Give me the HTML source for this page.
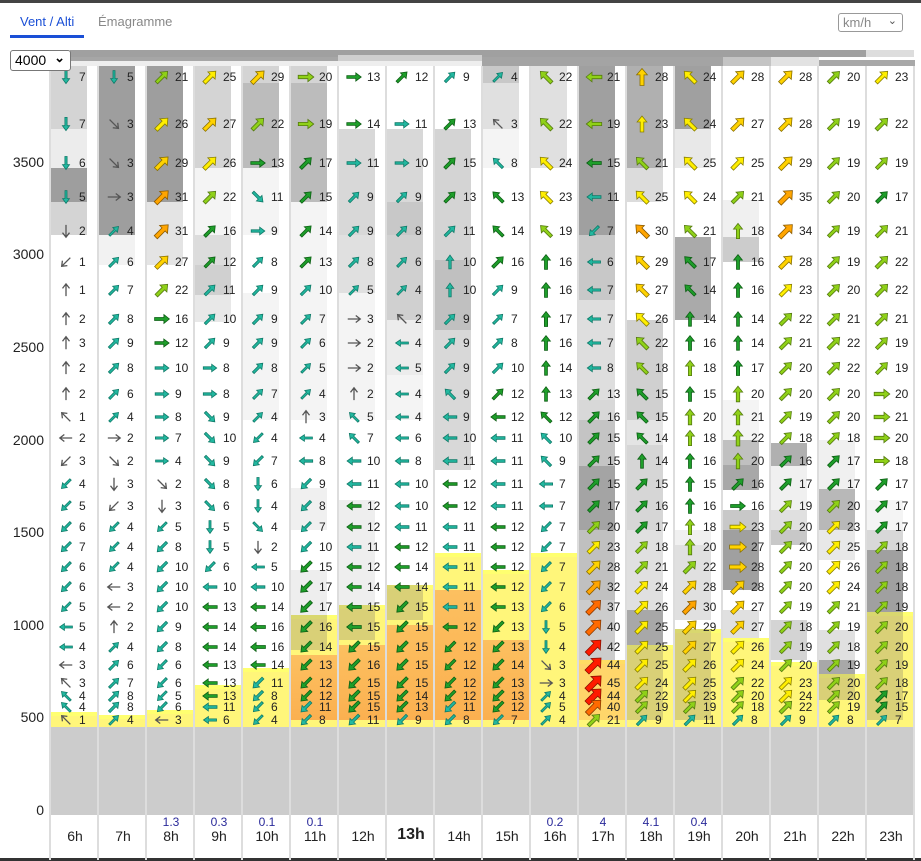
<!DOCTYPE html>
<html><head><meta charset="utf-8">
<style>
*{margin:0;padding:0;box-sizing:border-box}
html,body{width:921px;height:861px;overflow:hidden;background:#fff;font-family:"Liberation Sans",Arial,sans-serif;position:relative}
.abs{position:absolute}
.r{position:absolute;left:51px;height:14px;white-space:nowrap;font-size:12px;color:#222;line-height:14px;z-index:5}
.r b{display:inline-block;width:48px;padding-left:28px;font-weight:normal;position:relative}
.r b svg{position:absolute;left:4px;top:-4px;overflow:visible}
.yl{position:absolute;right:877px;font-size:14px;color:#222;width:44px;text-align:right}
.sep{position:absolute;top:66px;width:2px;height:794px;background:#ddd;z-index:4}
.hr{position:absolute;top:828px;font-size:14px;width:48px;text-align:center;color:#222}
.pr{position:absolute;top:815px;font-size:12px;width:48px;text-align:center;color:#2a2a9a}
</style></head><body>
<div class="abs" style="left:0;top:0;width:921px;height:3px;background:#444"></div>
<div class="abs" style="left:0;top:858px;width:921px;height:3px;background:#333"></div>
<div class="abs" style="left:20px;top:14px;font-size:13px;color:#1a4fd6">Vent / Alti</div>
<div class="abs" style="left:10px;top:35px;width:74px;height:3px;background:#1a4fd6"></div>
<div class="abs" style="left:98px;top:14px;font-size:13px;color:#888">Émagramme</div>
<div class="abs" style="left:838px;top:13px;width:65px;height:19px;border:1px solid #999;border-radius:3px;font-size:13px;color:#888;padding:1px 0 0 4px">km/h<span style="position:absolute;right:5px;top:0;font-size:11px;color:#555">&#8964;</span></div>

<div class="abs" style="left:70px;top:50px;width:796px;height:7px;background:#a0a0a0"></div>
<div class="abs" style="left:866px;top:50px;width:48px;height:7px;background:#ddd"></div>
<div class="abs" style="left:70px;top:57px;width:268px;height:4px;background:#a6a6a6"></div>
<div class="abs" style="left:338px;top:55px;width:144px;height:6px;background:#cfcfcf"></div>
<div class="abs" style="left:482px;top:57px;width:241px;height:9px;background:#a4a4a4"></div>
<div class="abs" style="left:723px;top:57px;width:48px;height:9px;background:#c4c4c4"></div>
<div class="abs" style="left:771px;top:57px;width:48px;height:9px;background:#e2e2e2"></div>
<div class="abs" style="left:819px;top:60px;width:96px;height:6px;background:#a8a8a8"></div>
<div class="abs" style="left:70px;top:61px;width:412px;height:5px;background:#eeeeee"></div>

<div id="bg"></div>

<div class="abs" style="left:51px;top:727px;width:863px;height:88px;background:#cccccc;z-index:3"></div>

<div class="yl" style="top:154px">3500</div>
<div class="yl" style="top:246px">3000</div>
<div class="yl" style="top:339px">2500</div>
<div class="yl" style="top:432px">2000</div>
<div class="yl" style="top:524px">1500</div>
<div class="yl" style="top:617px">1000</div>
<div class="yl" style="top:709px">500</div>
<div class="yl" style="top:802px">0</div>

<div class="abs" style="left:10px;top:50px;width:61px;height:21px;border:1px solid #777;border-radius:3px;background:#fff;font-size:14px;padding:1px 0 0 4px;z-index:9">4000<span style="position:absolute;right:5px;top:-1px;font-size:13px;font-weight:bold">&#8964;</span></div>

<div class="r" style="top:70px"><b>7</b><b>5</b><b>21</b><b>25</b><b>29</b><b>20</b><b>13</b><b>12</b><b>9</b><b>4</b><b>22</b><b>21</b><b>28</b><b>24</b><b>28</b><b>28</b><b>20</b><b>23</b></div>
<div class="r" style="top:117px"><b>7</b><b>3</b><b>26</b><b>27</b><b>22</b><b>19</b><b>14</b><b>11</b><b>13</b><b>3</b><b>22</b><b>19</b><b>23</b><b>24</b><b>27</b><b>28</b><b>19</b><b>22</b></div>
<div class="r" style="top:156px"><b>6</b><b>3</b><b>29</b><b>26</b><b>13</b><b>17</b><b>11</b><b>10</b><b>15</b><b>8</b><b>24</b><b>15</b><b>21</b><b>25</b><b>25</b><b>29</b><b>19</b><b>19</b></div>
<div class="r" style="top:190px"><b>5</b><b>3</b><b>31</b><b>22</b><b>11</b><b>15</b><b>9</b><b>9</b><b>13</b><b>13</b><b>23</b><b>11</b><b>25</b><b>24</b><b>21</b><b>35</b><b>20</b><b>17</b></div>
<div class="r" style="top:224px"><b>2</b><b>4</b><b>31</b><b>16</b><b>9</b><b>14</b><b>9</b><b>8</b><b>11</b><b>14</b><b>19</b><b>7</b><b>30</b><b>21</b><b>18</b><b>34</b><b>19</b><b>21</b></div>
<div class="r" style="top:255px"><b>1</b><b>6</b><b>27</b><b>12</b><b>8</b><b>13</b><b>8</b><b>6</b><b>10</b><b>16</b><b>16</b><b>6</b><b>29</b><b>17</b><b>16</b><b>28</b><b>19</b><b>22</b></div>
<div class="r" style="top:283px"><b>1</b><b>7</b><b>22</b><b>11</b><b>9</b><b>10</b><b>5</b><b>4</b><b>10</b><b>9</b><b>16</b><b>7</b><b>27</b><b>14</b><b>16</b><b>23</b><b>20</b><b>22</b></div>
<div class="r" style="top:312px"><b>2</b><b>8</b><b>16</b><b>10</b><b>9</b><b>7</b><b>3</b><b>2</b><b>9</b><b>7</b><b>17</b><b>7</b><b>26</b><b>14</b><b>14</b><b>22</b><b>21</b><b>21</b></div>
<div class="r" style="top:336px"><b>3</b><b>9</b><b>12</b><b>9</b><b>9</b><b>6</b><b>2</b><b>4</b><b>9</b><b>8</b><b>16</b><b>7</b><b>22</b><b>16</b><b>14</b><b>21</b><b>22</b><b>19</b></div>
<div class="r" style="top:361px"><b>2</b><b>8</b><b>10</b><b>8</b><b>8</b><b>5</b><b>2</b><b>5</b><b>9</b><b>10</b><b>14</b><b>8</b><b>18</b><b>18</b><b>17</b><b>20</b><b>22</b><b>19</b></div>
<div class="r" style="top:387px"><b>2</b><b>6</b><b>9</b><b>8</b><b>7</b><b>4</b><b>2</b><b>4</b><b>9</b><b>12</b><b>13</b><b>13</b><b>15</b><b>15</b><b>20</b><b>20</b><b>20</b><b>20</b></div>
<div class="r" style="top:410px"><b>1</b><b>4</b><b>8</b><b>9</b><b>4</b><b>3</b><b>5</b><b>4</b><b>9</b><b>12</b><b>12</b><b>16</b><b>15</b><b>20</b><b>21</b><b>19</b><b>20</b><b>21</b></div>
<div class="r" style="top:431px"><b>2</b><b>2</b><b>7</b><b>10</b><b>4</b><b>4</b><b>7</b><b>6</b><b>10</b><b>11</b><b>10</b><b>15</b><b>14</b><b>18</b><b>22</b><b>18</b><b>18</b><b>20</b></div>
<div class="r" style="top:454px"><b>3</b><b>2</b><b>4</b><b>9</b><b>7</b><b>8</b><b>10</b><b>8</b><b>11</b><b>11</b><b>9</b><b>15</b><b>14</b><b>16</b><b>20</b><b>16</b><b>17</b><b>18</b></div>
<div class="r" style="top:477px"><b>4</b><b>3</b><b>2</b><b>8</b><b>6</b><b>9</b><b>11</b><b>10</b><b>12</b><b>11</b><b>7</b><b>15</b><b>15</b><b>15</b><b>16</b><b>17</b><b>17</b><b>17</b></div>
<div class="r" style="top:499px"><b>5</b><b>3</b><b>3</b><b>6</b><b>4</b><b>8</b><b>12</b><b>10</b><b>12</b><b>11</b><b>7</b><b>17</b><b>16</b><b>16</b><b>16</b><b>19</b><b>20</b><b>17</b></div>
<div class="r" style="top:520px"><b>6</b><b>4</b><b>5</b><b>5</b><b>4</b><b>7</b><b>12</b><b>11</b><b>11</b><b>12</b><b>7</b><b>20</b><b>17</b><b>18</b><b>23</b><b>20</b><b>23</b><b>17</b></div>
<div class="r" style="top:540px"><b>7</b><b>4</b><b>8</b><b>5</b><b>2</b><b>10</b><b>11</b><b>12</b><b>11</b><b>12</b><b>7</b><b>23</b><b>18</b><b>20</b><b>27</b><b>20</b><b>25</b><b>18</b></div>
<div class="r" style="top:560px"><b>6</b><b>4</b><b>10</b><b>6</b><b>5</b><b>15</b><b>12</b><b>14</b><b>11</b><b>12</b><b>7</b><b>28</b><b>21</b><b>22</b><b>28</b><b>20</b><b>26</b><b>18</b></div>
<div class="r" style="top:580px"><b>6</b><b>3</b><b>10</b><b>10</b><b>10</b><b>17</b><b>14</b><b>14</b><b>11</b><b>12</b><b>7</b><b>32</b><b>24</b><b>28</b><b>28</b><b>20</b><b>24</b><b>18</b></div>
<div class="r" style="top:600px"><b>5</b><b>2</b><b>10</b><b>13</b><b>14</b><b>17</b><b>15</b><b>15</b><b>11</b><b>13</b><b>6</b><b>37</b><b>26</b><b>30</b><b>27</b><b>19</b><b>21</b><b>19</b></div>
<div class="r" style="top:620px"><b>5</b><b>2</b><b>9</b><b>14</b><b>16</b><b>16</b><b>15</b><b>15</b><b>12</b><b>13</b><b>5</b><b>40</b><b>25</b><b>29</b><b>27</b><b>18</b><b>19</b><b>20</b></div>
<div class="r" style="top:640px"><b>4</b><b>4</b><b>8</b><b>14</b><b>16</b><b>14</b><b>15</b><b>15</b><b>12</b><b>13</b><b>4</b><b>42</b><b>25</b><b>27</b><b>26</b><b>19</b><b>18</b><b>20</b></div>
<div class="r" style="top:658px"><b>3</b><b>6</b><b>6</b><b>13</b><b>14</b><b>13</b><b>16</b><b>15</b><b>12</b><b>14</b><b>3</b><b>44</b><b>25</b><b>26</b><b>24</b><b>20</b><b>19</b><b>19</b></div>
<div class="r" style="top:676px"><b>3</b><b>7</b><b>6</b><b>13</b><b>11</b><b>12</b><b>15</b><b>15</b><b>12</b><b>13</b><b>3</b><b>45</b><b>24</b><b>25</b><b>22</b><b>23</b><b>20</b><b>18</b></div>
<div class="r" style="top:689px"><b>4</b><b>8</b><b>5</b><b>13</b><b>8</b><b>12</b><b>15</b><b>14</b><b>12</b><b>13</b><b>4</b><b>44</b><b>22</b><b>23</b><b>20</b><b>24</b><b>20</b><b>17</b></div>
<div class="r" style="top:700px"><b>4</b><b>8</b><b>6</b><b>11</b><b>6</b><b>11</b><b>15</b><b>13</b><b>11</b><b>12</b><b>5</b><b>40</b><b>19</b><b>19</b><b>18</b><b>22</b><b>19</b><b>15</b></div>
<div class="r" style="top:713px"><b>1</b><b>4</b><b>3</b><b>6</b><b>4</b><b>8</b><b>11</b><b>9</b><b>8</b><b>7</b><b>4</b><b>21</b><b>9</b><b>11</b><b>8</b><b>9</b><b>8</b><b>7</b></div>

<div class="pr" style="left:147px">1.3</div><div class="pr" style="left:195px">0.3</div><div class="pr" style="left:243px">0.1</div><div class="pr" style="left:291px">0.1</div>
<div class="pr" style="left:531px">0.2</div><div class="pr" style="left:579px">4</div><div class="pr" style="left:627px">4.1</div><div class="pr" style="left:675px">0.4</div>
<div class="hr" style="left:51px">6h</div><div class="hr" style="left:99px">7h</div><div class="hr" style="left:147px">8h</div><div class="hr" style="left:195px">9h</div><div class="hr" style="left:243px">10h</div><div class="hr" style="left:291px">11h</div><div class="hr" style="left:339px">12h</div><div class="hr" style="left:387px;font-weight:bold;font-size:16px;top:826px">13h</div><div class="hr" style="left:435px">14h</div><div class="hr" style="left:483px">15h</div><div class="hr" style="left:531px">16h</div><div class="hr" style="left:579px">17h</div><div class="hr" style="left:627px">18h</div><div class="hr" style="left:675px">19h</div><div class="hr" style="left:723px">20h</div><div class="hr" style="left:771px">21h</div><div class="hr" style="left:819px">22h</div><div class="hr" style="left:867px">23h</div>

<script>
(function(){
var bg=document.getElementById('bg'),h='';
function R(c,y1,y2,col,w){h+='<div class="abs" style="left:'+(51+48*c)+'px;top:'+y1+'px;width:'+(w||36)+'px;height:'+(y2-y1)+'px;background:'+col+'"></div>';}
var cl=[[0,66,129,'#d4d4d4'],[0,129,168,'#ececec'],[0,168,202,'#9e9e9e'],[0,202,235,'#d4d4d4'],
[1,66,235,'#9e9e9e'],[1,235,265,'#f2f2f2'],
[2,66,202,'#9e9e9e'],[2,202,265,'#e4e4e4'],
[3,66,168,'#d4d4d4'],[3,168,235,'#f4f4f4'],[3,235,265,'#dcdcdc'],[3,265,295,'#d0d0d0'],[3,295,322,'#e8e8e8'],
[4,66,83,'#d4d4d4'],[4,83,168,'#bcbcbc'],[4,168,235,'#f4f4f4'],[4,293,420,'#f4f4f4'],
[5,66,83,'#d4d4d4'],[5,83,202,'#bcbcbc'],[5,202,420,'#f4f4f4'],[5,488,530,'#f0f0f0'],[5,570,615,'#eeeeee'],
[6,129,235,'#d8d8d8'],[6,235,293,'#e0e0e0'],[6,293,420,'#f4f4f4'],[6,500,605,'#eeeeee'],
[7,129,202,'#d8d8d8'],[7,202,235,'#c8c8c8'],[7,235,320,'#d0d0d0'],[7,320,375,'#ececec'],[7,375,420,'#f4f4f4'],
[8,129,260,'#d4d4d4'],[8,260,330,'#c0c0c0'],[8,330,470,'#d8d8d8'],
[9,66,83,'#c8c8c8'],[9,83,129,'#e0e0e0'],[9,129,168,'#f4f4f4'],
[10,66,168,'#e0e0e0'],
[11,66,235,'#a0a0a0'],[11,235,300,'#c8c8c8'],[11,300,400,'#dedede'],[11,400,420,'#d8d8d8'],[11,420,466,'#c4c4c4'],[11,466,530,'#a4a4a4'],[11,530,600,'#c0c0c0'],[11,600,660,'#cccccc'],
[12,66,168,'#b0b0b0'],[12,168,202,'#dcdcdc'],[12,320,420,'#d0d0d0'],[12,420,445,'#e4e4e4'],[12,445,530,'#d6d6d6'],[12,530,610,'#e0e0e0'],[12,610,645,'#a8a8a8'],
[13,66,129,'#a0a0a0'],[13,129,168,'#e8e8e8'],[13,237,320,'#aaaaaa'],[13,530,545,'#f0f0f0'],[13,545,620,'#e0e0e0'],
[14,200,237,'#f0f0f0'],[14,237,262,'#cccccc'],[14,400,440,'#f4f4f4'],[14,440,465,'#c0c0c0'],[14,465,490,'#a8a8a8'],[14,510,530,'#c8c8c8'],[14,530,590,'#a0a0a0'],[14,610,638,'#e0e0e0'],
[15,443,466,'#b0b0b0'],[15,466,510,'#f0f0f0'],[15,510,530,'#e0e0e0'],[15,530,545,'#c8c8c8'],[15,620,660,'#d4d4d4'],
[16,440,489,'#f0f0f0'],[16,489,530,'#b8b8b8'],[16,530,560,'#e8e8e8'],[16,630,660,'#e0e0e0'],[16,660,674,'#a8a8a8'],
[17,500,530,'#f4f4f4'],[17,530,550,'#d8d8d8'],[17,550,612,'#a0a0a0']];
cl.forEach(function(a){R(a[0],a[1],a[2],a[3]);});
var th=[712,715,710,685,668,615,605,585,553,570,553,660,645,629,638,662,674,612];
var org=[0,0,0,0,0,655,645,625,590,640,0,0,0,0,0,0,0,0];
th.forEach(function(t,c){R(c,t,727,'#fff67a',46);R(c,t,t+4,'#ffff70',46);if(org[c])R(c,org[c],720,'linear-gradient(#fcc060,#fbb050)',46);});
[[5,615,650],[6,605,640],[7,585,620],[12,645,720],[13,629,720],[17,612,720],[16,674,700]].forEach(function(a){R(a[0],a[1],a[2],'rgba(120,110,110,0.28)');});
R(11,660,720,'rgba(255,120,60,0.25)',46);
for(var i=0;i<19;i++)h+='<div class="sep" style="left:'+(49+48*i)+'px"></div>';
bg.innerHTML=h;

var D=["4444450000076555555556667777","4332111111112345555660111111","1111111222222234555555555556","1111111112233333445666666666","1123211111115544346666665555","2211111111106655555555555555","2221111222077666666666555555","1221111766666666666655555555","1111100111766666666666555555","1777711111166666666665555555","7777700000077766555554432111","6666566666111111111111111111","0077777777777011111111111111","7777777000000000001111111111","1111000000000012222111111111","1111111111111111111111111111","1111111111111111111111111111","1111111111222211111111111111"];
function col(s){if(s<=3)return['#888','#555'];if(s<=11)return['#22b8a0','#0f7a68'];if(s<=17)return['#1e9e2a','#0d5e14'];if(s<=22)return['#8fd118','#557a10'];if(s<=26)return['#ffee00','#8a8000'];if(s<=29)return['#ffd200','#8a7000'];if(s<=35)return['#ffa500','#8a5a00'];if(s<=41)return['#ff6a00','#8a3a00'];return['#ff1a00','#8a1000'];}
var rows=document.querySelectorAll('.r');
rows.forEach(function(r,ri){
 r.querySelectorAll('b').forEach(function(b,ci){
  var s=parseInt(b.textContent,10),d=+(D[ci][ri]||1),c=col(s),svg;
  var k=Math.min(s,45)/45,L=12+k*8,hw=3+k*3.8,sw=0.8+k*2,hl=4.5+k*3,y0=-L/2;
  if(s<=3){
   svg='<path d="M0 '+(L/2)+'V'+y0+'M-3.5 '+(y0+4.5)+'L0 '+y0+'L3.5 '+(y0+4.5)+'" fill="none" stroke="'+c[1]+'" stroke-width="1.3"/>';
  }else{
   var p=[[0,y0],[hw,y0+hl],[sw,y0+hl],[sw,L/2],[-sw,L/2],[-sw,y0+hl],[-hw,y0+hl]].map(function(q){return q[0].toFixed(1)+','+q[1].toFixed(1)}).join(' ');
   svg='<polygon points="'+p+'" fill="'+c[0]+'" stroke="'+c[1]+'" stroke-width="0.8"/>';
  }
  b.insertAdjacentHTML('afterbegin','<svg width="22" height="22" viewBox="-11 -11 22 22"><g transform="rotate('+(d*45)+')">'+svg+'</g></svg>');
 });
});
})();
</script>
</body></html>
